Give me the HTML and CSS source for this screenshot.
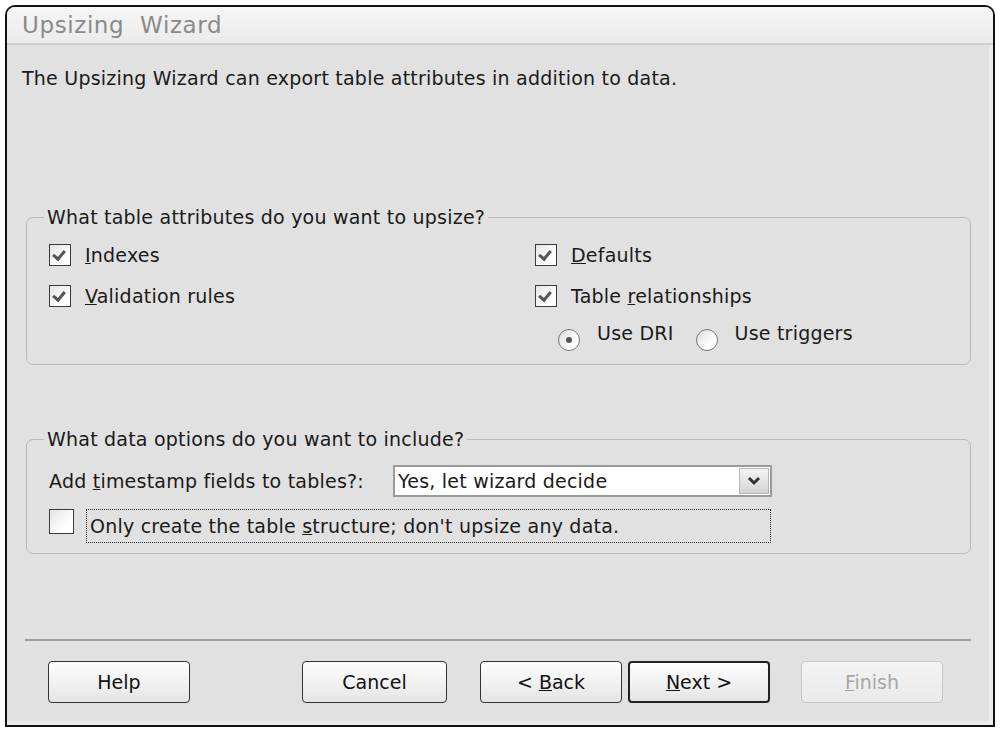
FILE: index.html
```html
<!DOCTYPE html>
<html lang="en">
<head>
  <meta charset="UTF-8">
  <title>Upsizing Wizard</title>
  <link rel="stylesheet" href="styles.css">
</head>
<body>
  <div class="window">
    <div class="titlebar">Upsizing&nbsp; Wizard</div>
    <div class="content">
      <p class="intro">The Upsizing Wizard can export table attributes in addition to data.</p>

      <fieldset class="group attrs">
        <legend>What table attributes do you want to upsize?</legend>
        <div class="grid">
          <label class="check"><span class="box on"></span><span><u>I</u>ndexes</span></label>
          <label class="check"><span class="box on"></span><span><u>D</u>efaults</span></label>
          <label class="check"><span class="box on"></span><span><u>V</u>alidation rules</span></label>
          <label class="check"><span class="box on"></span><span>Table <u>r</u>elationships</span></label>
          <div></div>
          <div class="radios">
            <label class="radio"><span class="dot on"></span><span>Use DRI</span></label>
            <label class="radio"><span class="dot"></span><span>Use triggers</span></label>
          </div>
        </div>
      </fieldset>

      <fieldset class="group data">
        <legend>What data options do you want to include?</legend>
        <div class="row">
          <span class="field-label">Add <u>t</u>imestamp fields to tables?:</span>
          <div class="select">
            <span class="value">Yes, let wizard decide</span>
            <span class="drop"><svg width="16" height="12" viewBox="0 0 16 12"><path d="M3 3 L8 8 L13 3" fill="none" stroke="#333" stroke-width="3"/></svg></span>
          </div>
        </div>
        <label class="check only"><span class="box"></span><span class="focus">Only create the table <u>s</u>tructure; don't upsize any data.</span></label>
      </fieldset>

      <div class="sep"></div>

      <div class="buttons">
        <button class="btn help">Help</button>
        <button class="btn cancel">Cancel</button>
        <button class="btn back">&lt; <u>B</u>ack</button>
        <button class="btn next"><u>N</u>ext &gt;</button>
        <button class="btn finish" disabled><u>F</u>inish</button>
      </div>
    </div>
  </div>
</body>
</html>
```

FILE: styles.css
```css
body {
  margin: 0;
  background: #fff;
  font-family: "DejaVu Sans", Verdana, sans-serif;
  font-size: 19px;
  letter-spacing: 0.22px;
  line-height: 22px;
  color: #1a1a1a;
}
.window {
  margin: 5px;
  width: 990px;
  height: 722px;
  box-sizing: border-box;
  border: 2px solid #111;
  border-radius: 10px 10px 0 0;
  background: #e1e1e1;
  display: flex;
  flex-direction: column;
  overflow: hidden;
  box-shadow: inset -4px -4px 0 #ececec;
}
.titlebar {
  height: 38px;
  box-sizing: border-box;
  padding: 7px 0 0 15px;
  background: linear-gradient(#f6f6f6, #ebebeb);
  border-bottom: 2px solid #cfcfcf;
  color: #8a8a8a;
  font-size: 23px;
  letter-spacing: 0.6px;
}
.content {
  flex: 1;
  display: flex;
  flex-direction: column;
  padding: 0 22px 0 19px;
}
.intro {
  margin: 22px 0 0 -4px;
}
.group {
  margin: 0;
  border: 1px solid #b9b9b9;
  border-radius: 7px;
  padding: 0 0 0 22px;
}
.group legend {
  margin-left: -5px;
  padding: 0 3px;
}
.attrs {
  margin-top: 117px;
  height: 159px;
  box-sizing: border-box;
}
.grid {
  display: grid;
  grid-template-columns: 486px auto;
  row-gap: 19px;
  margin-top: 16px;
}
.check {
  display: flex;
  align-items: center;
  gap: 14px;
  height: 22px;
}
.box {
  width: 20px;
  height: 20px;
  border: 1px solid #3a3a3a;
  background: linear-gradient(135deg, #e4e4e4, #fff 70%);
  display: inline-block;
  position: relative;
  flex: none;
}
.box.on::after {
  content: "";
  position: absolute;
  left: 5px;
  top: 3px;
  width: 5px;
  height: 9px;
  border: solid #555;
  border-width: 0 3px 3px 0;
  transform: rotate(40deg);
}
.radios {
  display: flex;
  gap: 22px;
  margin-left: 23px;
  margin-top: -4px;
}
.radio {
  display: flex;
  gap: 17px;
}
.dot {
  width: 20px;
  height: 20px;
  border: 1px solid #777;
  border-radius: 50%;
  background: linear-gradient(135deg, #dcdcdc, #fff 70%);
  margin-top: 7px;
  position: relative;
  flex: none;
}
.dot.on::after {
  content: "";
  position: absolute;
  left: 7px;
  top: 7px;
  width: 6px;
  height: 6px;
  border-radius: 50%;
  background: #555;
}
.data {
  margin-top: 63px;
  height: 126px;
  box-sizing: border-box;
}
.row {
  display: flex;
  align-items: center;
  margin-top: 15px;
}
.field-label {
  width: 344px;
}
.select {
  width: 379px;
  height: 32px;
  box-sizing: border-box;
  border: 2px solid #9a9a9a;
  background: #fff;
  display: flex;
  align-items: center;
  justify-content: space-between;
  padding-left: 3px;
}
.drop {
  width: 30px;
  height: 26px;
  margin-right: 1px;
  border: 1px solid #b5b5b5;
  background: linear-gradient(#f4f4f4, #d4d4d4);
  display: flex;
  align-items: center;
  justify-content: center;
  box-sizing: border-box;
}
.only {
  margin-top: 12px;
  height: 34px;
  align-items: flex-start;
}
.only .box {
  width: 23px;
  height: 23px;
}
.focus {
  border: 1px dotted #222;
  padding: 5px 3px;
  width: 685px;
  box-sizing: border-box;
  margin-left: -2px;
}
.sep {
  margin-top: 85px;
  border-top: 2px solid #9d9d9d;
  margin-left: -1px;
}
.buttons {
  display: flex;
  margin-top: 20px;
  padding-left: 22px;
}
.btn {
  width: 142px;
  height: 42px;
  font: inherit;
  color: #111;
  border: 1px solid #333;
  border-radius: 4px;
  background: linear-gradient(#fdfdfd, #f2f2f2 50%, #e4e4e4);
  padding: 0;
}
.cancel { margin-left: 112px; width: 145px; }
.back { margin-left: 33px; }
.next { margin-left: 6px; border: 2px solid #222; }
.finish {
  margin-left: 31px;
  color: #a6a6a6;
  border-color: #c6c6c6;
  background: linear-gradient(#f3f3f3, #eaeaea);
}
```
